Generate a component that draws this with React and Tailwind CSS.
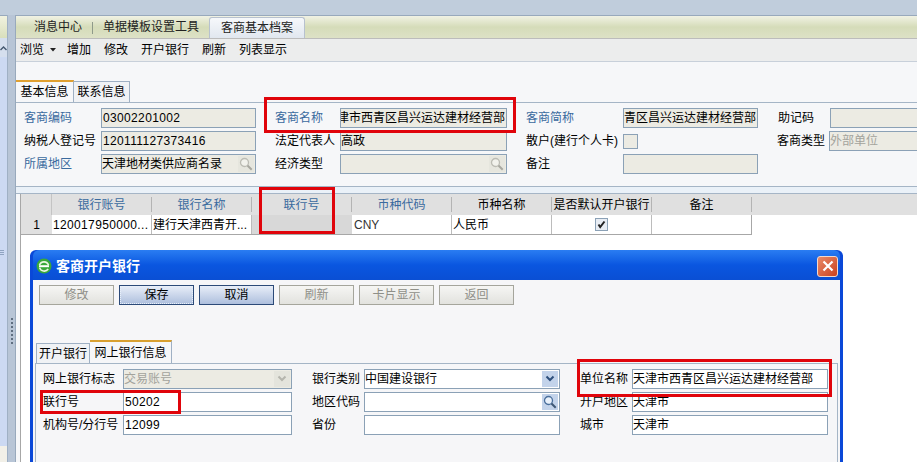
const cjk = "font-['Liberation_Sans','Noto_Sans_CJK_SC',sans-serif]";

const Field = ({ w, value, bg = 'bg-[#ecebe3]', color = 'text-black', children, latin, end }) => (
  <div className={`relative flex h-5 shrink-0 items-center overflow-hidden border border-[#8ba1b6] ${end ? 'justify-end pr-px' : ''} ${bg} ${color} ${w}`}>
    <span className={`shrink-0 whitespace-nowrap ${latin ? 'pl-px tracking-[0.35px]' : ''}`}>{value}</span>
    {children}
  </div>
);

const Label = ({ text, w, blue }) => (
  <span className={`shrink-0 whitespace-nowrap ${w} ${blue ? 'text-[#3a6a9e]' : 'text-black'}`}>{text}</span>
);

const Search = ({ active }) => (
  <span className={`absolute right-px top-px flex h-4 w-4 items-center justify-center ${active ? 'bg-[#c3d3ea]' : 'bg-[#e6e6de]'}`}>
    <svg width="14" height="14" viewBox="0 0 14 14" fill="none">
      <circle cx="5.5" cy="5.5" r="4" stroke={active ? '#4a6f9c' : '#bcbcb4'} strokeWidth="1.3" fill={active ? '#e8f0fa' : '#f2f2ec'} />
      <path d="M8.5 8.5l4.2 4.2" stroke={active ? '#3f5875' : '#a8a8a0'} strokeWidth="2" />
    </svg>
  </span>
);

const Chevron = ({ active }) => (
  <span className={`absolute right-px top-px flex h-4 w-4 items-center justify-center ${active ? 'bg-[#c3d3ea]' : 'bg-[#e4e4dc]'}`}>
    <svg width="10" height="8" viewBox="0 0 10 8" fill="none">
      <path d="M1.5 1.5L5 5l3.5-3.5" stroke={active ? '#2d4f7c' : '#b5b5ad'} strokeWidth="2" />
    </svg>
  </span>
);

const Red = ({ className }) => (
  <div className={`pointer-events-none absolute border-[3px] border-[#e0040b] ${className}`} />
);

const headers = [
  { t: '银行账号', blue: true },
  { t: '银行名称', blue: true },
  { t: '联行号', blue: true },
  { t: '币种代码', blue: true },
  { t: '币种名称' },
  { t: '是否默认开户银行' },
  { t: '备注' },
];

const Btn = ({ text, on, focus }) => (
  <div
    className={`flex h-5 w-[75px] items-center justify-center border ${
      on
        ? 'border-[#2c4a78] bg-gradient-to-b from-[#e8eef8] to-[#aebfdd] text-black'
        : 'border-[#a5a59c] bg-gradient-to-b from-[#f6f6f4] to-[#e2e2de] text-[#8f8f88]'
    }`}
  >
    <span className={`flex h-full w-full items-center justify-center ${focus ? 'border border-dotted border-[#e8f0fa]' : ''}`}>{text}</span>
  </div>
);

const App = () => {
  return (
    <div className={`relative h-[462px] w-[917px] overflow-hidden bg-[#c0cddc] text-xs text-black ${cjk}`}>
      <div className="flex h-full pt-[15px]">
        {/* left rail */}
        <div className="flex h-full w-[15px] shrink-0">
          <div className="flex w-2 flex-col border-r border-[#9fb0c4] bg-[#ccdaf3]">
            <div className="h-[23px] border-t border-[#98a9bc] bg-gradient-to-b from-[#f1f2e0] to-[#d9dfbc]" />
            <div className="flex h-[19px] items-center justify-center bg-[#d5dfee]">
              <svg width="7" height="6" viewBox="0 0 7 6" fill="none"><path d="M0.5 5L3.5 2l3 3" stroke="#44586f" strokeWidth="1.4" /></svg>
            </div>
            <div className="mt-px flex flex-1 flex-col bg-[#ccd9f2] pt-[192px]">
              <span className="h-px w-1 bg-[#8fa3c0]" />
              <span className="mt-px h-px w-1 bg-[#8fa3c0]" />
              <span className="mt-px h-px w-1 bg-[#8fa3c0]" />
            </div>
            <div className="h-4 bg-[#f2f0e8]" />
          </div>
          <div className="flex w-[7px] flex-col items-center gap-[2px] bg-[#b8c5d6] pt-[303px]">
            {[0, 1, 2, 3, 4, 5, 6].map((i) => (
              <span key={i} className="h-[2px] w-[2px] bg-[#5f6e80]" />
            ))}
          </div>
        </div>

        {/* main panel */}
        <div className="flex min-w-0 flex-1 flex-col border-l border-t border-[#98a9bc] bg-[#f6f7f9]">
          <div className="flex h-[22px] items-end bg-gradient-to-b from-[#f1f2e4] via-[#d5dcb9] to-[#dde1c6] pl-[8px]">
            <span className="flex h-[22px] w-[68px] items-center justify-center text-[#222]">消息中心</span>
            <span className="mb-1 h-3 w-px bg-[#8f9a8a]" />
            <span className="flex h-[22px] w-[116px] items-center justify-center text-[#222]">单据模板设置工具</span>
            <span className="flex h-[21px] w-[96px] items-center justify-center rounded-t-[3px] border border-b-0 border-[#b7c1cf] bg-gradient-to-b from-[#f6f8fb] to-[#e1e7ef] text-[#222]">
              客商基本档案
            </span>
          </div>
          <div className="flex h-[24px] items-center gap-[13px] border-b border-t border-b-[#c8d0da] border-t-[#bcbcbc] bg-[#eceded] pl-[4px]">
            <span className="flex items-center gap-[6px]">
              浏览
              <svg width="6" height="4" viewBox="0 0 6 4"><path d="M0 0h6L3 3.5z" fill="#222" /></svg>
            </span>
            <span className="-ml-[2px]">增加</span>
            <span>修改</span>
            <span>开户银行</span>
            <span>刷新</span>
            <span>列表显示</span>
          </div>

          {/* info tabs */}
          <div className="mt-[18px] flex h-[22px] items-end">
            <span className="flex h-[22px] w-[58px] items-center justify-center border-r border-t-2 border-r-[#9fb0c4] border-t-[#e0a030] bg-[#f6f7f9]">基本信息</span>
            <span className="flex h-[21px] w-[56px] items-center justify-center border-r border-t border-[#9fb0c4] bg-[#f0f2f5]">联系信息</span>
          </div>

          {/* base form */}
          <div className="flex h-[85px] flex-col gap-[3px] border-y border-[#a5b5c6] pl-[8px] pt-[5px]">
            <div className="flex items-center">
              <Label blue text="客商编码" w="w-[77px]" />
              <Field latin w="w-[155px]" value="03002201002" />
              <Label blue text="客商名称" w="ml-[19px] w-[65px]" />
              <Field end w="w-[167px]" value="天津市西青区昌兴运达建材经营部" />
              <Label blue text="客商简称" w="ml-[19px] w-[97px]" />
              <Field end w="w-[135px]" value="青区昌兴运达建材经营部" />
              <Label text="助记码" w="ml-[20px] w-[52px]" />
              <Field w="w-[100px]" value="" />
            </div>
            <div className="flex items-center">
              <Label text="纳税人登记号" w="w-[77px]" />
              <Field latin w="w-[155px]" value="120111127373416" />
              <Label text="法定代表人" w="ml-[19px] w-[65px]" />
              <Field w="w-[167px]" value="高政" />
              <Label text="散户(建行个人卡)" w="ml-[19px] w-[97px]" />
              <span className="h-[15px] w-[15px] shrink-0 border border-[#8ba1b6] bg-[#ecebe3]" />
              <Label text="客商类型" w="ml-[139px] w-[52px]" />
              <Field w="w-[100px]" color="text-[#a3a39c]" value="外部单位" />
            </div>
            <div className="flex items-center">
              <Label blue text="所属地区" w="w-[77px]" />
              <Field w="w-[155px]" value="天津地材类供应商名录"><Search /></Field>
              <Label text="经济类型" w="ml-[19px] w-[65px]" />
              <Field w="w-[167px]" value=""><Search /></Field>
              <Label text="备注" w="ml-[19px] w-[97px]" />
              <Field w="w-[135px]" value="" />
            </div>
          </div>

          {/* bank grid */}
          <div className="h-[7px] border-b border-[#a5b5c6] bg-[#eaf1f8]" />
          <div className="flex-1 pl-[4px]">
            <div className="h-full border-l border-[#a7a7a7] bg-white">
              <div className="flex h-[21px] bg-[#e0e0e0]">
                <span className="w-[31px] shrink-0 border-r border-[#c4c4c4]" />
                {headers.map((h) => (
                  <span
                    key={h.t}
                    className={`my-[3px] flex w-[100px] shrink-0 items-center justify-center whitespace-nowrap border-r border-[#b4b4b4] ${h.blue ? 'text-[#3a6a9e]' : 'text-black'}`}
                  >
                    {h.t}
                  </span>
                ))}
              </div>
              <div className="flex h-[20px] w-[731px] border-b border-[#a7a7a7]">
                <span className="flex w-[31px] items-center justify-center bg-[#e0e0e0]">1</span>
                <span className="flex w-[100px] items-center border-r border-[#bcbcbc] pl-px tracking-[0.35px]">120017950000...</span>
                <span className="flex w-[100px] items-center border-r border-[#bcbcbc] pl-px">建行天津西青开...</span>
                <span className="w-[100px] bg-[#d8d8d8]" />
                <span className="flex w-[100px] items-center border-r border-[#bcbcbc] pl-[2px] text-[#333]">CNY</span>
                <span className="flex w-[100px] items-center border-r border-[#bcbcbc] pl-px">人民币</span>
                <span className="flex w-[100px] items-center justify-center border-r border-[#bcbcbc]">
                  <span className="flex h-[13px] w-[13px] items-center justify-center border border-[#8ba1b6] bg-[#e8edf4]">
                    <svg width="9" height="9" viewBox="0 0 9 9" fill="none"><path d="M1.5 4.5L3.2 7 7.5 1.5" stroke="#222" strokeWidth="2" /></svg>
                  </span>
                </span>
                <span className="w-[100px] border-r border-[#a7a7a7]" />
              </div>
            </div>
          </div>
        </div>
      </div>

      {/* dialog window */}
      <div className="absolute left-[30px] top-[250px] flex h-[230px] w-[813px] flex-col rounded-t-[6px] bg-[#0a48d8] px-[3px] pb-[3px]">
        <div className="flex h-[30px] shrink-0 items-center rounded-t-[6px] bg-gradient-to-b from-[#2a7df2] via-[#0a56e0] to-[#0a4fd4] pl-[3px] pr-[2px] pt-[2px]">
          <svg width="16" height="16" viewBox="0 0 16 16">
            <circle cx="8" cy="8" r="7.5" fill="#3aa83a" />
            <path d="M3 7.2h10v2H3z" fill="#fff" />
            <path d="M3.5 7.2a4.7 4.7 0 0 1 9 0" fill="none" stroke="#e8f5e0" strokeWidth="1.6" />
            <path d="M3.6 9.6a4.8 4.8 0 0 0 8.6 1.4" fill="none" stroke="#e8f5e0" strokeWidth="1.6" />
          </svg>
          <span className="ml-[4px] text-[14px] font-bold leading-none text-white">客商开户银行</span>
          <span className="ml-auto flex h-[21px] w-[21px] items-center justify-center rounded-[3px] border border-[#f2d8cc] bg-gradient-to-br from-[#e98a68] to-[#c93f1c]">
            <svg width="12" height="12" viewBox="0 0 12 12" fill="none"><path d="M1.5 1.5l9 9M10.5 1.5l-9 9" stroke="#fff" strokeWidth="2.2" /></svg>
          </span>
        </div>
        <div className="flex flex-1 flex-col bg-[#f6f6f8] pt-[5px]">
          <div className="flex gap-[5px] pl-[6px]">
            <Btn text="修改" />
            <Btn on focus text="保存" />
            <Btn on text="取消" />
            <Btn text="刷新" />
            <Btn text="卡片显示" />
            <Btn text="返回" />
          </div>
          <div className="mt-[35px] flex h-[23px] items-end pl-[3px]">
            <span className="flex h-[20px] w-[54px] items-center justify-center border-l border-r border-t border-[#9fb0c4] bg-[#f0f2f5]">开户银行</span>
            <span className="flex h-[23px] w-[82px] items-center justify-center border-r border-t-2 border-r-[#9fb0c4] border-t-[#d9a030]">网上银行信息</span>
          </div>
          <div className="mx-[2px] flex flex-1 flex-col gap-[3px] border-l border-r border-t border-[#a5b5c6] pl-[7px] pt-[5px]">
            <div className="flex items-center">
              <Label text="网上银行标志" w="w-[80px]" />
              <Field w="w-[169px]" color="text-[#a3a39c]" value="交易账号"><Chevron /></Field>
              <Label text="银行类别" w="ml-[20px] w-[52px]" />
              <Field w="w-[196px]" bg="bg-white" value="中国建设银行"><Chevron active /></Field>
              <Label text="单位名称" w="ml-[20px] w-[52px]" />
              <Field w="w-[196px]" bg="bg-white" value="天津市西青区昌兴运达建材经营部" />
            </div>
            <div className="flex items-center">
              <Label text="联行号" w="w-[80px]" />
              <Field latin w="w-[169px]" bg="bg-white" value="50202" />
              <Label text="地区代码" w="ml-[20px] w-[52px]" />
              <Field w="w-[196px]" bg="bg-white" value=""><Search active /></Field>
              <Label text="开户地区" w="ml-[20px] w-[52px]" />
              <Field w="w-[196px]" bg="bg-white" value="天津市" />
            </div>
            <div className="flex items-center">
              <Label text="机构号/分行号" w="w-[80px]" />
              <Field latin w="w-[169px]" bg="bg-white" value="12099" />
              <Label text="省份" w="ml-[20px] w-[52px]" />
              <Field w="w-[196px]" bg="bg-white" value="" />
              <Label text="城市" w="ml-[20px] w-[52px]" />
              <Field w="w-[196px]" bg="bg-white" value="天津市" />
            </div>
          </div>
        </div>
      </div>

      {/* red annotations */}
      <Red className="left-[264px] top-[97px] h-[36px] w-[252px]" />
      <Red className="left-[259px] top-[187px] h-[47px] w-[76px]" />
      <Red className="left-[40px] top-[390px] h-[24px] w-[141px]" />
      <Red className="left-[577px] top-[359px] h-[38px] w-[255px]" />
    </div>
  );
};

export default App;
